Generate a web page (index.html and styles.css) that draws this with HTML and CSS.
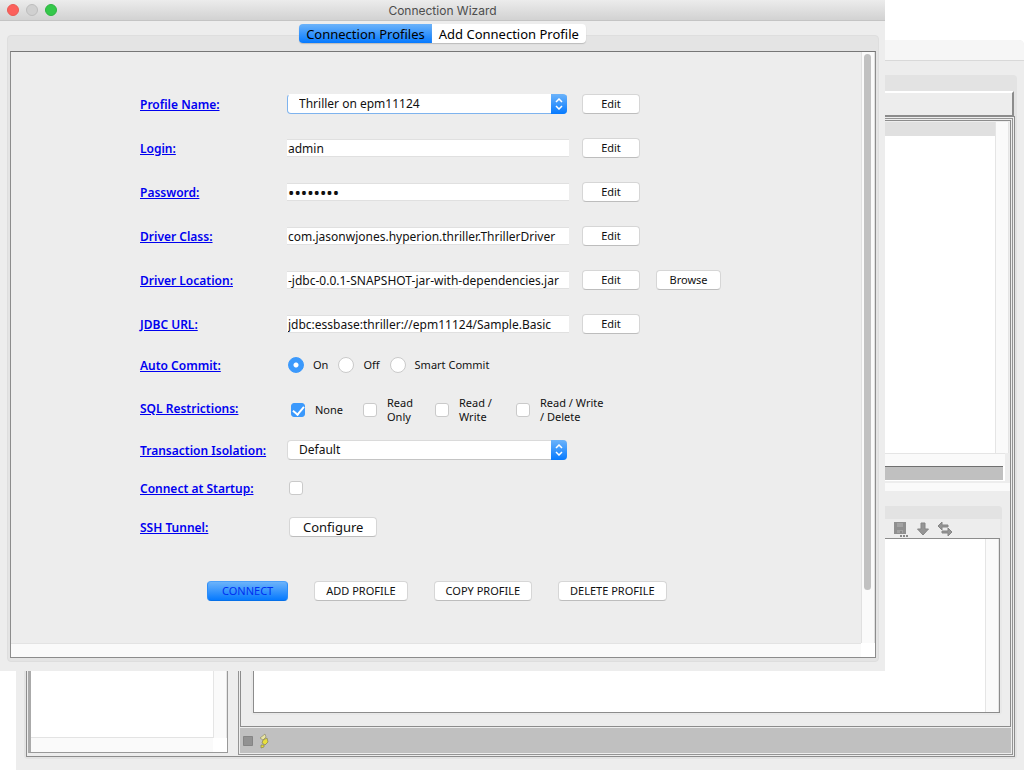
FILE: index.html
```html
<!DOCTYPE html>
<html lang="en">
<head>
<meta charset="utf-8">
<title>Connection Wizard</title>
<link rel="stylesheet" href="styles.css">
</head>
<body>
<div class="desktop">
  <section class="main-window" aria-label="Main window">
    <div class="main-title"></div>
    <div class="tab-frame">
      <div class="toolbar"></div>
      <div class="split">
        <div class="tree">
          <div class="tree-view"></div>
          <div class="vtrack"></div>
          <div class="htrack"></div>
        </div>
        <div class="workspace">
          <div class="documents">
            <div class="results">
              <div class="grid-view"><div class="grid-head"></div></div>
              <div class="vtrack"></div>
            </div>
            <div class="results-scroll"></div>
            <div class="message-bar"></div>
            <div class="divider"></div>
            <div class="log">
              <div class="log-tabs"></div>
              <div class="log-tools">
                <svg width="16" height="16" viewBox="0 0 16 16"><path fill="#8f8f8f" d="M1 1h12v12H1z"/><path fill="#a2a2a2" d="M4 2h6v4H4zM4 9h6v3H4z"/><path fill="#898989" d="M7 10h2v2H7z"/><path fill="#898989" d="M7 14h2v2H7zM10 14h2v2h-2zM13 14h2v2h-2z"/></svg>
                <svg width="14" height="16" viewBox="0 0 14 16"><path fill="#959595" stroke="#858585" d="M5 2h4v6h3.500L7 14 1.500 8H5z"/></svg>
                <svg width="16" height="16" viewBox="0 0 16 16"><path fill="#959595" stroke="#858585" d="M1 5l4-4v3h6v2H5v3zM15 11l-4-4v3H5v2h6v3z"/></svg>
              </div>
              <div class="log-view"><div class="log-text"></div><div class="vtrack"></div></div>
            </div>
          </div>
          <div class="status">
            <svg width="12" height="12" viewBox="0 0 12 12"><path fill="#929292" stroke="#858585" d="M1.500 1.500h9v9h-9z"/></svg>
            <svg width="12" height="16" viewBox="0 0 12 16"><path fill="#e9e5a0" stroke="#8f8d70" stroke-width=".7" d="M2 5l5-4 1 3-3 3z"/><path fill="#e8df3c" stroke="#858151" stroke-width=".7" d="M5 7l4-2 1 4-3 3-3-2zM3 12l3 0 0 2-3 1z"/></svg>
          </div>
        </div>
      </div>
    </div>
  </section>

  <main class="wizard">
    <header class="titlebar">
      <div class="lights">
        <button class="light close" aria-label="Close"></button>
        <button class="light minimize" aria-label="Minimize" disabled></button>
        <button class="light maximize" aria-label="Zoom"></button>
      </div>
      <h1 class="title">Connection Wizard</h1>
    </header>
    <nav class="tabs">
      <button class="tab active">Connection Profiles</button><button class="tab">Add Connection Profile</button>
    </nav>
    <div class="panel">
      <div class="pane">
        <form class="form">
          <div class="row">
            <a href="#profile" id="l-profile">Profile Name:</a>
            <div class="select focused"><select id="profile" aria-labelledby="l-profile"><option>Thriller on epm11124</option></select><span class="arrows"><svg width="8" height="12" viewBox="0 0 8 12"><path d="M1 4l3-3 3 3M1 8l3 3 3-3"/></svg></span></div>
            <button type="button" class="btn edit">Edit</button>
          </div>
          <div class="row">
            <a href="#login" id="l-login">Login:</a>
            <input class="text" id="login" aria-labelledby="l-login" value="admin">
            <button type="button" class="btn edit">Edit</button>
          </div>
          <div class="row">
            <a href="#password" id="l-password">Password:</a>
            <input class="text password" type="password" id="password" aria-labelledby="l-password" value="password">
            <button type="button" class="btn edit">Edit</button>
          </div>
          <div class="row">
            <a href="#driver" id="l-driver">Driver Class:</a>
            <input class="text" id="driver" aria-labelledby="l-driver" value="com.jasonwjones.hyperion.thriller.ThrillerDriver">
            <button type="button" class="btn edit">Edit</button>
          </div>
          <div class="row">
            <a href="#location" id="l-location">Driver Location:</a>
            <input class="text" id="location" aria-labelledby="l-location" value="-jdbc-0.0.1-SNAPSHOT-jar-with-dependencies.jar">
            <button type="button" class="btn edit">Edit</button>
            <button type="button" class="btn browse">Browse</button>
          </div>
          <div class="row">
            <a href="#url" id="l-url">JDBC URL:</a>
            <input class="text" id="url" aria-labelledby="l-url" value="jdbc:essbase:thriller://epm11124/Sample.Basic">
            <button type="button" class="btn edit">Edit</button>
          </div>
          <div class="row commit">
            <a href="#on" id="l-commit">Auto Commit:</a>
            <div class="options radios" role="radiogroup" aria-labelledby="l-commit">
              <label><input type="radio" name="commit" id="on" checked>On</label>
              <label><input type="radio" name="commit">Off</label>
              <label><input type="radio" name="commit">Smart Commit</label>
            </div>
          </div>
          <div class="row restrictions">
            <a href="#none" id="l-sql">SQL Restrictions:</a>
            <div class="options checks" role="group" aria-labelledby="l-sql">
              <label><input type="checkbox" id="none" checked>None</label>
              <label><input type="checkbox"><span>Read<br>Only</span></label>
              <label><input type="checkbox"><span>Read /<br>Write</span></label>
              <label><input type="checkbox"><span>Read / Write<br>/ Delete</span></label>
            </div>
          </div>
          <div class="row isolation">
            <a href="#isolation" id="l-isolation">Transaction Isolation:</a>
            <div class="select"><select id="isolation" aria-labelledby="l-isolation"><option>Default</option></select><span class="arrows"><svg width="8" height="12" viewBox="0 0 8 12"><path d="M1 4l3-3 3 3M1 8l3 3 3-3"/></svg></span></div>
          </div>
          <div class="row startup">
            <a href="#startup" id="l-startup">Connect at Startup:</a>
            <div class="single"><input type="checkbox" id="startup" aria-labelledby="l-startup"></div>
          </div>
          <div class="row ssh">
            <a href="#ssh" id="l-ssh">SSH Tunnel:</a>
            <div class="single"><button type="button" class="btn configure" id="ssh">Configure</button></div>
          </div>
          <div class="actions">
            <button type="button" class="btn primary">CONNECT</button>
            <button type="button" class="btn">ADD PROFILE</button>
            <button type="button" class="btn">COPY PROFILE</button>
            <button type="button" class="btn">DELETE PROFILE</button>
          </div>
        </form>
        <div class="scroll-y"><div class="thumb"></div></div>
        <div class="scroll-x"></div>
        <div class="corner"></div>
      </div>
    </div>
  </main>
</div>
</body>
</html>
```
FILE: styles.css
```css
* { box-sizing: border-box; }

body {
  margin: 0;
  background: #fff;
  color: #111;
  font: 11px/14px "Noto Sans", "Open Sans", sans-serif;
}

button, input, select { font: inherit; color: inherit; }

.desktop {
  position: relative;
  display: flex;
  min-height: 100vh;
}

/* Main window behind the wizard */

.main-window {
  flex: 1;
  display: flex;
  flex-direction: column;
  margin: 40px 0 0 16px;
  background: #ededed;
  border-radius: 5px 5px 0 0;
}

.main-title {
  height: 21px;
  background: #f6f6f6;
  border-bottom: 1px solid #d9d9d9;
  border-radius: 5px 5px 0 0;
}

.tab-frame {
  flex: 1;
  display: flex;
  flex-direction: column;
  margin: 14px 7px 11px 8px;
  padding: 16px 2px 2px;
  background: #e3e3e3;
  border-radius: 4px;
}

.toolbar {
  height: 25px;
  margin-right: 1px;
  background: #ededed;
  border: 2px solid #8c8c8c;
  border-top-color: #fff;
  border-bottom-width: 1px;
}

.split {
  flex: 1;
  display: flex;
  gap: 10px;
  padding: 1px;
  background: #ededed;
  border: 1px solid #8c8c8c;
}

.tree {
  display: grid;
  grid-template: 1fr 14px / 1fr 14px;
  width: 200px;
  margin-bottom: 2px;
  background: #fff;
  border: 1px solid #999;
  border-left: 3px solid #aaa;
}

.tree-view { border-bottom: 1px solid #e3e3e3; }

.vtrack {
  width: 14px;
  background: #fafafa;
  border: solid #e5e5e5;
  border-width: 0 1px;
}

.htrack { background: #fafafa; }

.workspace {
  flex: 1;
  display: flex;
  flex-direction: column;
  padding: 1px;
  border: 1px solid #949494;
}

.documents {
  flex: 1;
  display: flex;
  flex-direction: column;
  border: 1px solid #8c8c8c;
}

.results {
  flex: 1;
  display: flex;
  padding: 1px 1px 0 0;
}

.grid-view { flex: 1; background: #fff; }
.grid-head { height: 14px; background: #e0e0e0; }

.results-scroll {
  height: 13px;
  margin-right: 5px;
  background: #fafafa;
  border-top: 1px solid #e5e5e5;
}

.message-bar {
  height: 15px;
  margin-right: 5px;
  background: #c0c0c0;
  border: solid #fff;
  border-width: 0 2px 1px 0;
  box-shadow: inset 0 1px #707070;
}

.divider {
  height: 8px;
  margin-top: 2px;
  background: #fafafa;
}

.log {
  display: flex;
  flex-direction: column;
  margin: 15px 8px 11px 10px;
  background: #e8e8e8;
  border-radius: 4px;
}

.log-tabs {
  height: 13px;
  background: #e3e3e3;
  border-radius: 4px 4px 0 0;
}

.log-tools {
  display: flex;
  justify-content: flex-end;
  gap: 7px;
  height: 19px;
  padding: 2px 47px 0 0;
  margin-right: 2px;
  background: #ededed;
}

.log-view {
  display: flex;
  height: 175px;
  margin: 0 2px 2px;
  background: #fff;
  border: 1px solid #8c8c8c;
}

.log-text { flex: 1; }

.status {
  display: flex;
  align-items: center;
  gap: 4px;
  height: 25px;
  margin-top: 1px;
  padding-left: 2px;
  background: #c0c0c0;
}

/* Wizard window */

.wizard {
  position: absolute;
  top: 0;
  left: 0;
  right: 139px;
  padding-bottom: 9px;
  background: #ededed;
}

.titlebar {
  display: grid;
  grid-template-columns: 60px 1fr 60px;
  align-items: center;
  height: 21px;
  background: linear-gradient(#ececec, #d2d2d2);
  border-bottom: 1px solid #c4c4c4;
}

.lights {
  display: flex;
  gap: 7px;
  padding-left: 7px;
}

.light {
  width: 12px;
  height: 12px;
  padding: 0;
  border: 1px solid #e95b54;
  border-radius: 50%;
  background: #fc605c;
}

.minimize { background: #d0d0d0; border-color: #bdbdbd; }
.maximize { background: #34c84a; border-color: #2db441; }

.title {
  margin: 0;
  padding-top: 1px;
  font: 12px/18px Inter, Roboto, sans-serif;
  color: #4d4d4d;
  text-align: center;
}

.tabs {
  position: relative;
  z-index: 1;
  display: flex;
  justify-content: center;
  padding-top: 3px;
}

.tab {
  height: 19px;
  padding: 0 7px;
  font-size: 13px;
  line-height: 18px;
  color: #000;
  background: #fff;
  border: 0;
  border-radius: 0 4px 4px 0;
  box-shadow: 0 1px 1px #bbb;
}

.tab.active {
  background: linear-gradient(#6cb3fa, #067aff);
  border-radius: 4px 0 0 4px;
}

.panel {
  margin: -8px 6px 0 7px;
  padding: 15px 2px 3px;
  background: #e4e4e4;
  border: 1px solid #dedede;
  border-radius: 4px;
}

.pane {
  display: grid;
  grid-template: 1fr 14px / 1fr 14px;
  background: #ededed;
  border: 1px solid #8c8c8c;
  border-top-color: #777;
}

.scroll-y {
  padding: 2px 3px 53px 2px;
  background: #fafafa;
  border: solid #e0e0e0;
  border-width: 0 1px;
}

.thumb {
  height: 100%;
  background: #c1c1c1;
  border-radius: 4px;
}

.scroll-x {
  background: #fafafa;
  border-top: 1px solid #e3e3e3;
}

.corner { background: #fff; }

.form { padding: 30px 0 42px 129px; }

.row {
  display: grid;
  grid-template-columns: 147px 282px 71px 94px;
  align-items: center;
  height: 44px;
}

.row > .edit { margin-left: 13px; width: 58px; }
.row > .browse { margin-left: 16px; width: 65px; }

.row > a {
  padding-top: 1px;
  color: #0000f0;
  font-size: 12px;
  font-weight: 600;
  text-decoration: underline;
}

.text {
  width: 100%;
  height: 18px;
  padding: 0 1px;
  background: #fff;
  border: 1px solid #e0e0e0;
  border-width: 1px 0;
  font-size: 12px;
  line-height: 16px;
  outline: 0;
}

.text.password { font-size: 17px; }

.btn {
  height: 20px;
  padding: 0 11px;
  background: #fff;
  border: 1px solid #d6d6d6;
  border-bottom-color: #bdbdbd;
  border-radius: 4px;
  line-height: 14px;
  white-space: nowrap;
}

.btn.edit, .btn.browse { padding: 0 0 1px; }

.select {
  position: relative;
  display: flex;
  width: 280px;
  height: 20px;
}

.select select {
  flex: 1;
  appearance: none;
  padding: 0 24px 0 11px;
  background: #fff;
  border: 1px solid #dadada;
  border-bottom-color: #c4c4c4;
  border-radius: 4px;
  font-size: 12px;
  outline: 0;
}

.select.focused select { border-color: #fff #7eb3ee #7eb3ee; }

.arrows {
  position: absolute;
  top: 0;
  right: 0;
  bottom: 0;
  display: grid;
  place-items: center;
  width: 16px;
  background: linear-gradient(#6cb3fa, #067aff);
  border-radius: 0 4px 4px 0;
  pointer-events: none;
}

.arrows path {
  fill: none;
  stroke: #fff;
  stroke-width: 1.5;
}

.row.commit { height: 38px; }
.row.restrictions { height: 52px; }
.row.isolation { height: 28px; }
.row.startup { height: 48px; }
.row.ssh { height: 30px; }

.row.restrictions > a { padding-bottom: 4px; }

.options { display: flex; grid-column: 2 / -1; }
.options label { display: flex; align-items: center; }
.radios { gap: 10px; padding-left: 1px; }
.radios label { gap: 9px; }
.checks {
  display: grid;
  grid-template-columns: 72px 72px 81px auto;
  padding-left: 4px;
}
.checks label { gap: 10px; }
.single { padding-left: 2px; }

input[type="radio"], input[type="checkbox"] {
  display: block;
  appearance: none;
  flex: none;
  margin: 0;
  background: #fff;
  border: 1px solid #cacaca;
}

input[type="radio"] {
  width: 16px;
  height: 16px;
  border-radius: 50%;
}

input[type="radio"]:checked {
  background: radial-gradient(circle, #fff 2px, #3b99fc 3px);
  border-color: #3b99fc;
}

input[type="checkbox"] {
  width: 14px;
  height: 14px;
  border-radius: 3px;
}

input[type="checkbox"]:checked {
  display: grid;
  place-items: center;
  background: #3b99fc;
  border-color: #3b99fc;
}

input[type="checkbox"]:checked::before {
  content: "";
  width: 5px;
  height: 9px;
  margin-bottom: 3px;
  border: solid #fff;
  border-width: 0 2px 2px 0;
  transform: rotate(40deg);
}

.btn.configure { padding: 0 13px; font-size: 13px; }

.actions {
  display: flex;
  gap: 26px;
  padding: 39px 0 0 67px;
}

.btn.primary {
  padding: 0 14px;
  color: #0030f0;
  background: linear-gradient(#6cb3fa, #067aff);
  border-color: #4ba0fa #2b8cf8 #0670e8;
}
```
